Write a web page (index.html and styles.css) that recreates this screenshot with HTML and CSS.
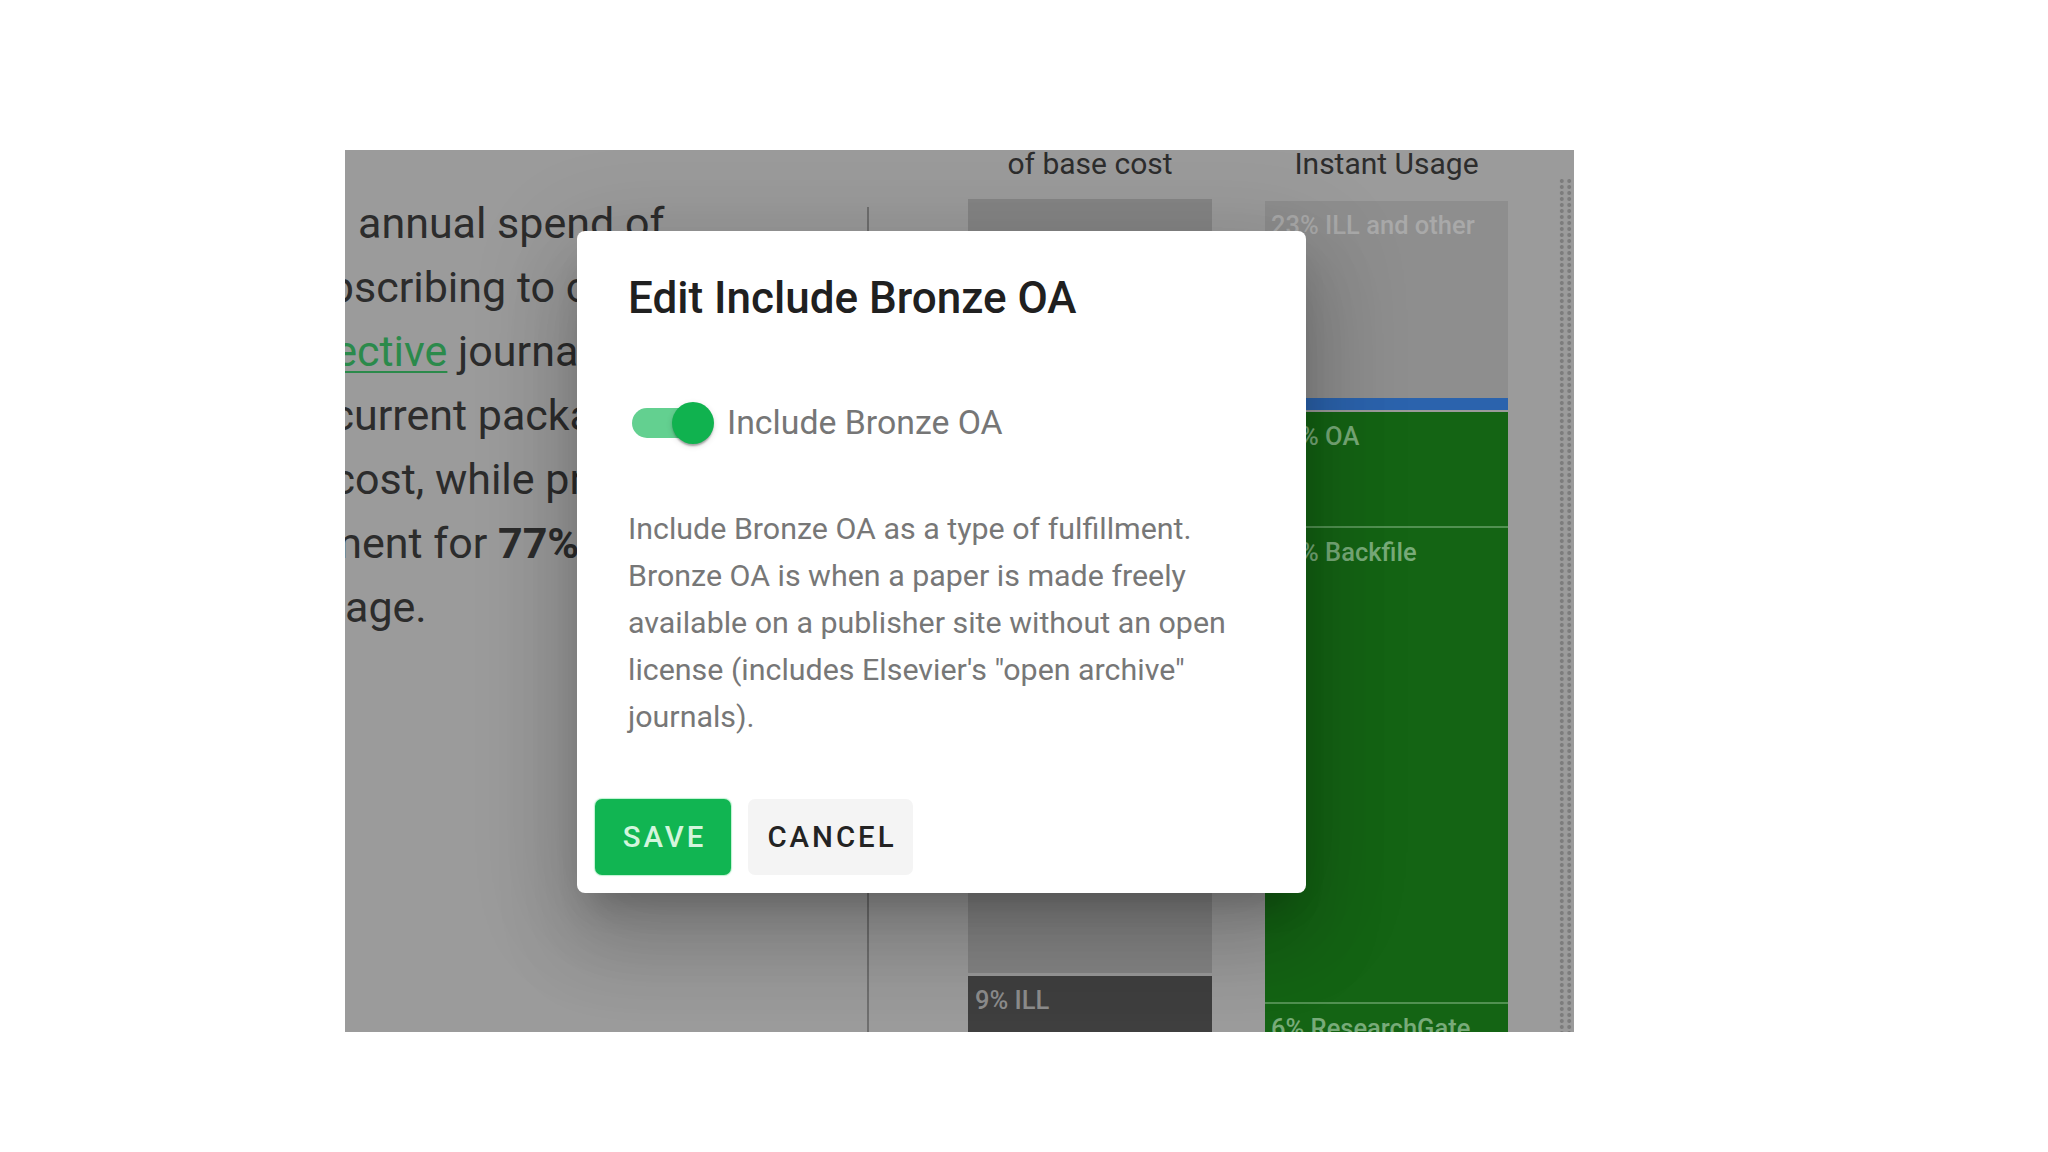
FILE: index.html
```html
<!DOCTYPE html>
<html lang="en">
<head>
<meta charset="utf-8">
<title>Edit Include Bronze OA</title>
<link rel="stylesheet" href="styles.css">
</head>
<body>
<div class="shot">
  <div class="summary">
    <div class="line line-first">annual spend of</div>
    <div class="line"><span class="cut w9">sub</span>scribing to our</div>
    <div class="line"><a class="link"><span class="cut w12 ul">sele</span>ctive</a> journals</div>
    <div class="line"><span class="cut w9">c</span>urrent package</div>
    <div class="line"><span class="cut w10">c</span>ost, while providing</div>
    <div class="line"><span class="cut w17">fulfillm</span>ent for <b>77%</b> of</div>
    <div class="line"><span class="cut w0">us</span>age.</div>
  </div>
  <div class="divider"></div>
  <div class="charts">
    <div class="col">
      <div class="col-head">of base cost</div>
      <div class="bar bar-cost">
        <div class="seg seg-base"></div>
        <div class="seg seg-ill">9% ILL</div>
      </div>
    </div>
    <div class="col col-usage">
      <div class="col-head">Instant Usage</div>
      <div class="bar bar-usage">
        <div class="seg seg-other">23% ILL and other</div>
        <div class="seg seg-blue"></div>
        <div class="seg seg-green seg-oa">27% OA</div>
        <div class="seg seg-green seg-backfile">44% Backfile</div>
        <div class="seg seg-green seg-rg">6% ResearchGate</div>
      </div>
    </div>
  </div>
  <div class="scroll-strip"></div>

  <div class="dialog" role="dialog" aria-labelledby="dlg-title">
    <h2 class="dialog-title" id="dlg-title">Edit Include Bronze OA</h2>
    <label class="toggle-row">
      <span class="switch"><span class="switch-track"></span><span class="switch-thumb"></span></span>
      <span class="toggle-label">Include Bronze OA</span>
    </label>
    <p class="dialog-text">Include Bronze OA as a type of fulfillment. Bronze OA is when a paper is made freely available on a publisher site without an open license (includes Elsevier's &quot;open archive&quot; journals).</p>
    <div class="dialog-actions">
      <button class="btn btn-save" type="button">Save</button>
      <button class="btn btn-cancel" type="button">Cancel</button>
    </div>
  </div>
</div>
</body>
</html>
```
FILE: styles.css
```css
* { box-sizing: border-box; }
html, body { margin: 0; padding: 0; }
body {
  width: 2048px;
  height: 1152px;
  overflow: hidden;
  background: #ffffff;
  font-family: Roboto, "Liberation Sans", Arial, sans-serif;
}

.shot {
  position: relative;
  display: flex;
  margin: 150px 0 0 345px;
  width: 1229px;
  height: 882px;
  overflow: hidden;
  background: #9b9b9b;
}

/* left summary text */
.summary {
  flex: none;
  width: 522px;
  padding-top: 41px;
  font-size: 43px;
  line-height: 64px;
  color: #2c2c2c;
  white-space: nowrap;
  overflow: hidden;
}
.line { height: 64px; }
.line-first { padding-left: 13px; }
.summary b { font-weight: 700; }
.cut {
  display: inline-block;
  direction: rtl;
  text-align: right;
  white-space: nowrap;
}
.w0 { width: 0; }
.w9 { width: 9px; }
.w10 { width: 10px; }
.w12 { width: 12px; }
.w17 { width: 17px; }
.link, .ul {
  color: #2b8a4b;
  text-decoration: underline;
  text-decoration-thickness: 2px;
  text-underline-offset: 5px;
}

.divider {
  flex: none;
  width: 2px;
  margin-top: 57px;
  background: #6f6f6f;
}

/* charts */
.charts {
  flex: none;
  display: flex;
  gap: 53px;
  margin-left: 99px;
}
.col {
  width: 244px;
  display: flex;
  flex-direction: column;
}
.col-usage { width: 243px; }
.col-head {
  margin-top: -4px;
  height: 36px;
  font-size: 30px;
  line-height: 36px;
  text-align: center;
  color: #2d2d2d;
  white-space: nowrap;
}
.bar {
  display: flex;
  flex-direction: column;
  margin-top: 17px;
}
.bar-usage { margin-top: 19px; }
.seg {
  flex: none;
  padding: 9px 6px;
  font-size: 25.5px;
  line-height: 30px;
  font-weight: 500;
  white-space: nowrap;
}
.seg-base { height: 774px; background: #858585; }
.seg-ill {
  margin-top: 3px;
  height: 120px;
  padding-left: 7px;
  background: #3f3f3f;
  color: #8d8d8d;
}
.seg-other { height: 197px; background: #8e8e8e; color: #a9a9a9; }
.seg-blue { height: 12px; padding: 0; background: #2b63ad; }
.seg-green { background: #146414; color: #78ab79; }
.seg-oa { margin-top: 2px; height: 114px; }
.seg-backfile { height: 476px; border-top: 2px solid #519151; }
.seg-rg { height: 100px; border-top: 2px solid #519151; }

.scroll-strip {
  flex: none;
  width: 15px;
  margin: 28px 1px 0 auto;
  background-image: radial-gradient(circle at center, #7c7c7c 0, #7c7c7c 1.6px, rgba(124,124,124,0) 2.3px);
  background-size: 7.5px 6px;
}

/* dialog */
.dialog {
  position: absolute;
  left: 232px;
  top: 81px;
  width: 729px;
  background: #ffffff;
  border-radius: 8px;
  box-shadow: 0 23px 32px -15px rgba(0,0,0,0.2), 0 50px 80px 6px rgba(0,0,0,0.14), 0 19px 97px 17px rgba(0,0,0,0.12);
}
.dialog-title {
  margin: 0;
  padding: 35px 50px 0 51px;
  font-size: 44px;
  line-height: 64px;
  font-weight: 500;
  color: #202020;
}
.toggle-row {
  display: flex;
  align-items: center;
  height: 80px;
  margin-top: 53px;
  padding-left: 55px;
}
.switch {
  position: relative;
  flex: none;
  width: 82px;
  height: 42px;
}
.switch-track {
  position: absolute;
  left: 0;
  top: 6px;
  width: 69px;
  height: 30px;
  border-radius: 15px;
  background: #63d090;
}
.switch-thumb {
  position: absolute;
  left: 40px;
  top: 0;
  width: 42px;
  height: 42px;
  border-radius: 50%;
  background: #10b24f;
  box-shadow: 0 4px 2px -2px rgba(0,0,0,0.2), 0 2px 2px 0 rgba(0,0,0,0.14), 0 2px 6px 0 rgba(0,0,0,0.12);
}
.toggle-label {
  margin-left: 13px;
  font-size: 33.8px;
  line-height: 40px;
  color: #767676;
}
.dialog-text {
  margin: 42px 0 0;
  padding: 0 49px 0 51px;
  font-size: 30.4px;
  line-height: 47px;
  color: #777777;
}
.dialog-actions {
  display: flex;
  gap: 17px;
  margin-top: 59px;
  padding: 0 18px 18px;
}
.btn {
  height: 76px;
  border: 0;
  border-radius: 7px;
  padding: 0 0 0 3px;
  font-family: inherit;
  font-size: 29.4px;
  font-weight: 500;
  letter-spacing: 3px;
  text-transform: uppercase;
}
.btn-save {
  width: 136px;
  background: #11b552;
  color: #d3f5dd;
  box-shadow: 0 0 1px 1px rgba(120, 230, 160, 0.5);
}
.btn-cancel {
  width: 165px;
  background: #f4f4f4;
  color: #232323;
}
```
